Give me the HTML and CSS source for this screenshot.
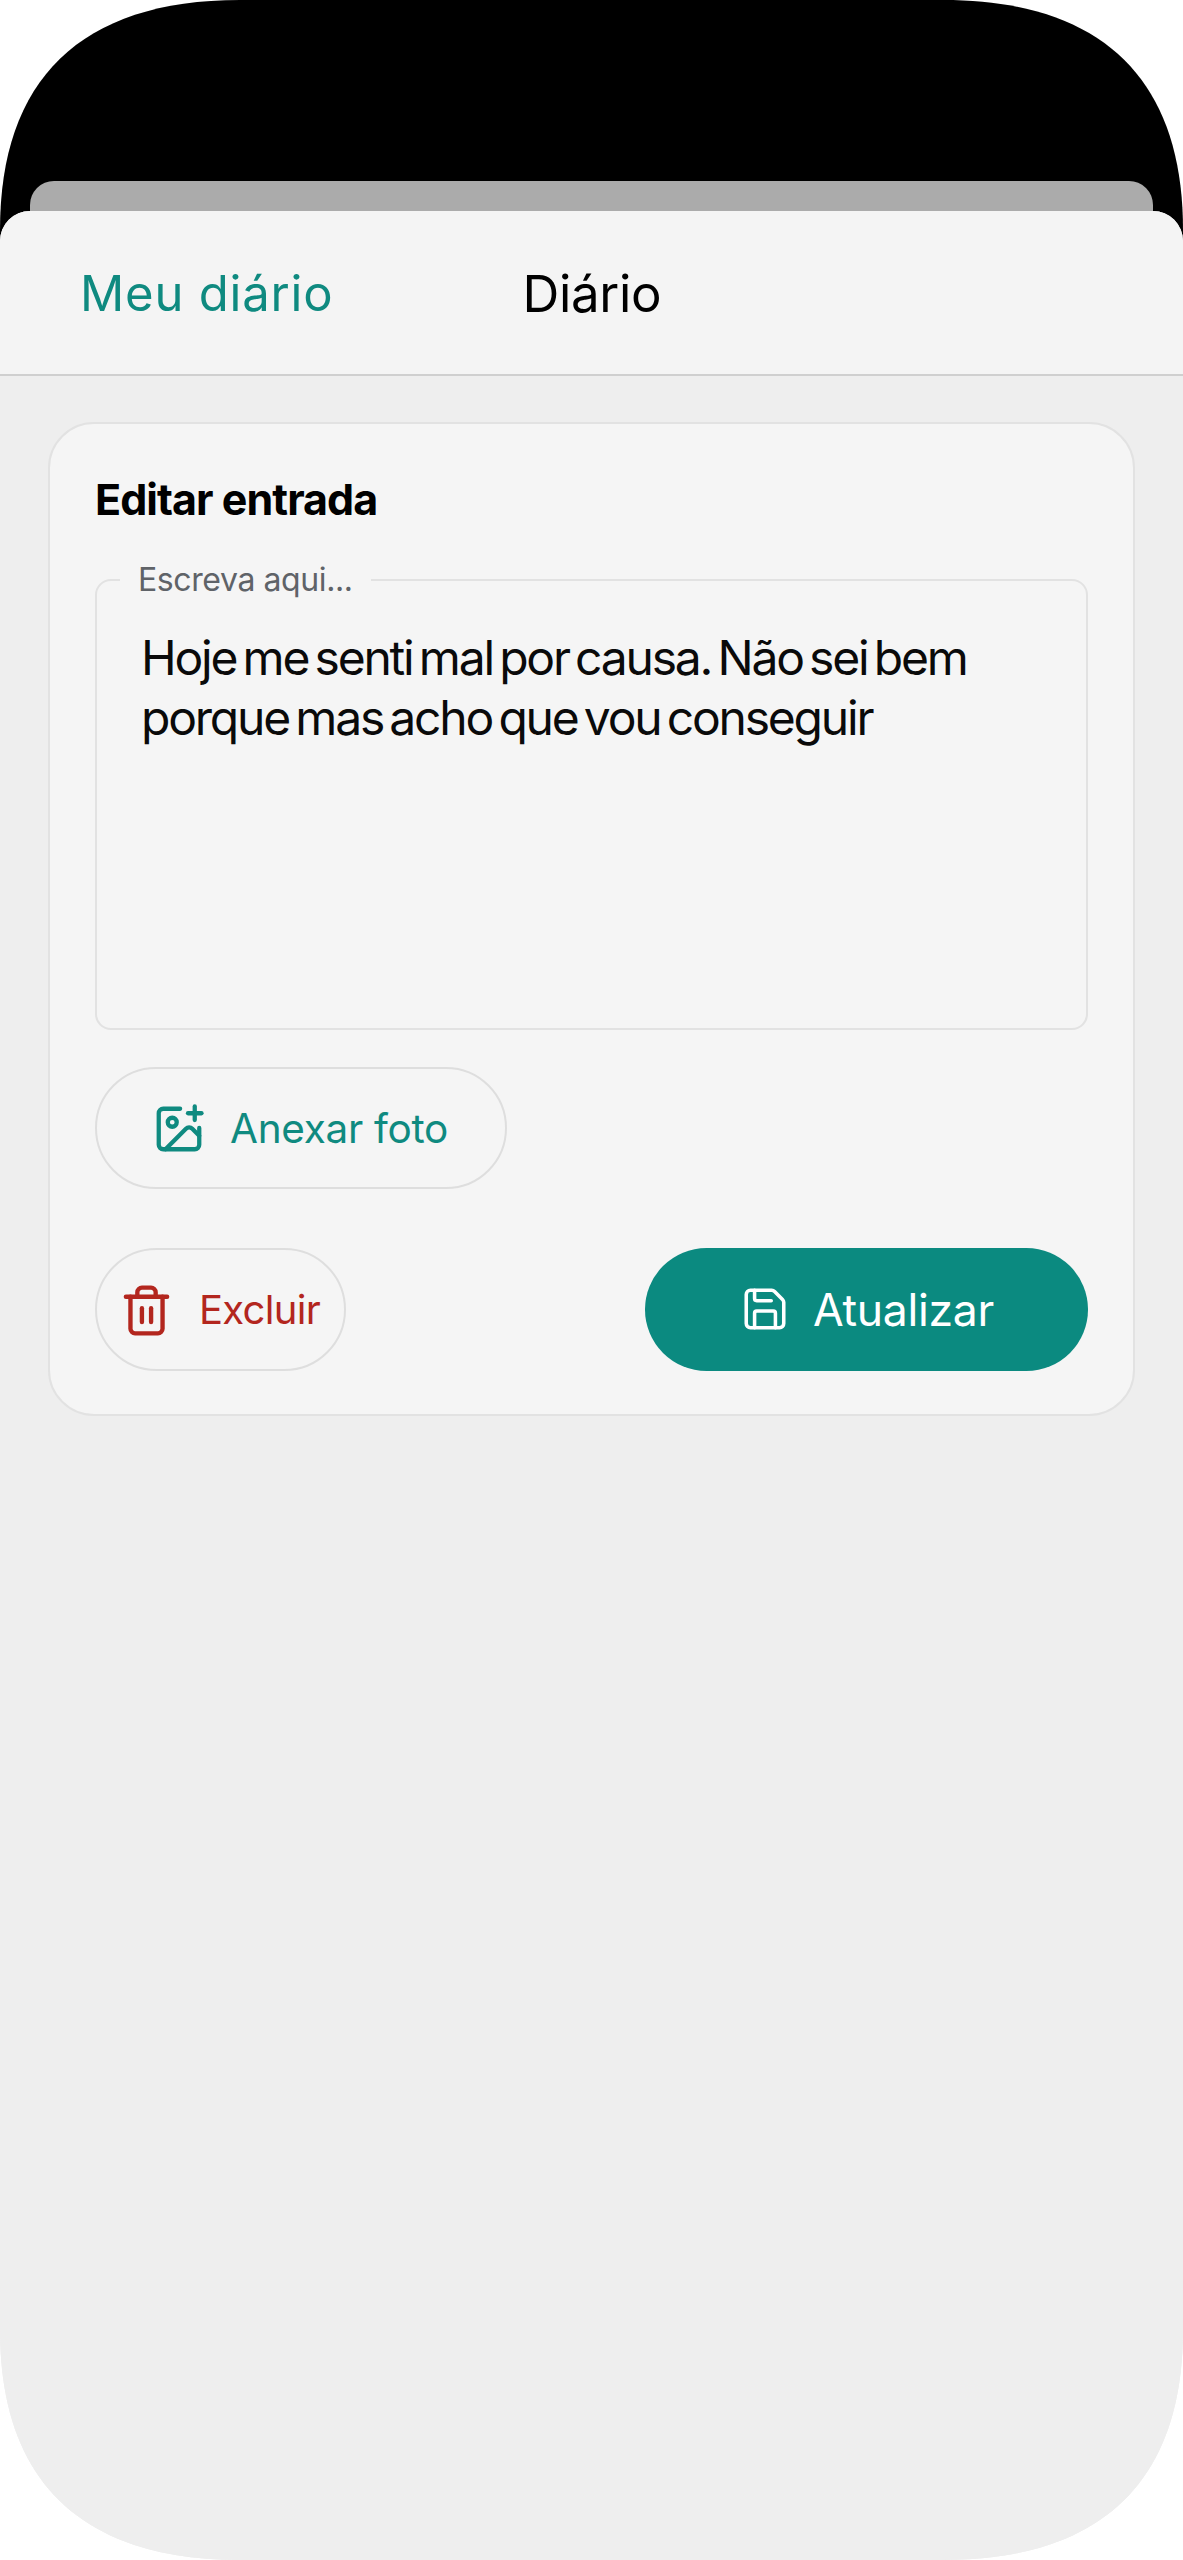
FILE: index.html
```html
<!DOCTYPE html>
<html lang="pt-BR">
<head>
  <meta charset="UTF-8" />
  <title>Diário</title>
  <link rel="stylesheet" href="styles.css">
</head>
<body>

<div class="phone">
  <div class="status-area">
    <div class="peek"></div>
  </div>

  <div class="sheet">
    <header class="topbar">
      <a class="back-link">Meu diário</a>
      <span class="topbar-title">Diário</span>
    </header>

    <main class="content">
      <section class="card">
        <h1 class="card-title">Editar entrada</h1>

        <fieldset class="field">
          <legend class="field-label">Escreva aqui...</legend>
          <p class="field-text">Hoje me senti mal por causa. Não sei bem porque mas acho que vou conseguir</p>
        </fieldset>

        <button class="btn btn-attach">
          <svg class="icon icon-attach" viewBox="0 0 24 24">
            <path d="M16 5h6" />
            <path d="M19 2v6" />
            <path d="M21 11.5V19a2 2 0 0 1-2 2H5a2 2 0 0 1-2-2V5a2 2 0 0 1 2-2h7.5" />
            <path d="m21 15-3.086-3.086a2 2 0 0 0-2.828 0L6 21" />
            <circle cx="9" cy="9" r="2" />
          </svg>
          <span>Anexar foto</span>
        </button>

        <div class="actions">
          <button class="btn btn-delete">
            <svg class="icon icon-delete" viewBox="0 0 24 24">
              <path d="M3 6h18" />
              <path d="M19 6v14c0 1-1 2-2 2H7c-1 0-2-1-2-2V6" />
              <path d="M8 6V4c0-1 1-2 2-2h4c1 0 2 1 2 2v2" />
              <path d="M10 11v6" />
              <path d="M14 11v6" />
            </svg>
            <span>Excluir</span>
          </button>

          <button class="btn btn-save">
            <svg class="icon icon-save" viewBox="0 0 24 24">
              <path d="M15.2 3a2 2 0 0 1 1.4.6l3.8 3.8a2 2 0 0 1 .6 1.4V19a2 2 0 0 1-2 2H5a2 2 0 0 1-2-2V5a2 2 0 0 1 2-2z" />
              <path d="M17 21v-7a1 1 0 0 0-1-1H8a1 1 0 0 0-1 1v7" />
              <path d="M7 3v4a1 1 0 0 0 1 1h7" />
            </svg>
            <span>Atualizar</span>
          </button>
        </div>
      </section>
    </main>
  </div>
</div>

</body>
</html>
```

FILE: styles.css
```css
body {
  margin: 0;
  padding: 0;
  background: white;
  font-family: Inter, "Noto Sans", sans-serif;
}

/* rounded device outline */
.phone {
  display: flex;
  flex-direction: column;
  width: 1183px;
  height: 2560px;
  background: #eeeeee;
  clip-path: path("M0 230 C0 80 80 0 240 0 H943 C1103 0 1183 80 1183 230 V2330 C1183 2480 1103 2560 943 2560 H240 C80 2560 0 2480 0 2330 Z");
}

.status-area {
  flex: none;
  height: 260px;
  padding-top: 181px;
  box-sizing: border-box;
  background: black;
}

.peek {
  height: 60px;
  margin: 0 30px;
  background: #ababab;
  border-radius: 24px 24px 0 0;
}

/* sheet slides over the black area so its corners show it */
.sheet {
  flex: 1;
  margin-top: -49px;
  background: #eeeeee;
  border-radius: 30px 30px 0 0;
  overflow: hidden;
}

.topbar {
  display: flex;
  align-items: center;
  height: 165px;
  padding: 2px 0 0 80px;
  box-sizing: border-box;
  background: #f4f4f4;
  border-bottom: 2px solid #cfcfcf;
}

.back-link {
  font-size: 49px;
  letter-spacing: 0.8px;
  color: #0f8a80;
}

.topbar-title {
  margin-left: 189px;
  font-size: 51px;
  letter-spacing: -0.3px;
  color: black;
}

.content {
  padding: 46px 48px 0;
}

.card {
  height: 994px;
  padding: 50px 45px 0;
  box-sizing: border-box;
  background: #f5f5f5;
  border: 2px solid #e2e2e2;
  border-radius: 46px;
}

.card-title {
  margin: 0 0 36px;
  font-size: 43px;
  line-height: 50px;
  font-weight: 700;
  letter-spacing: -0.95px;
  color: black;
}

.field {
  margin: 0 0 37px;
  padding: 0;
  min-width: 0;
  background: #f5f5f5;
  border: 2px solid #e2e2e2;
  border-radius: 16px;
}

.field-label {
  margin-left: 23px;
  padding: 0 18px;
  font-size: 32px;
  line-height: 40px;
  letter-spacing: -0.4px;
  color: #5f6368;
}

.field-text {
  height: 428px;
  margin: 0;
  padding: 28px 44px 0;
  box-sizing: border-box;
  font-size: 48px;
  line-height: 60px;
  letter-spacing: -2.2px;
  word-spacing: -5px;
  color: #0a0a0a;
}

.btn {
  display: flex;
  align-items: center;
  height: 123px;
  padding: 0;
  box-sizing: border-box;
  font-family: inherit;
  background: transparent;
  border: 2px solid #dedede;
  border-radius: 62px;
}

.icon {
  flex: none;
  fill: none;
  stroke: currentColor;
  stroke-linecap: round;
  stroke-linejoin: round;
}

.btn-attach {
  height: 122px;
  padding: 0 57px 0 55px;
  font-size: 40.5px;
  letter-spacing: -0.3px;
  color: #0f8a80;
}

.icon-attach {
  width: 54px;
  height: 54px;
  margin-top: 2px;
  margin-right: 24px;
  stroke-width: 1.9;
}

.actions {
  display: flex;
  justify-content: space-between;
  margin-top: 59px;
}

.btn-delete {
  padding: 0 24px 0 22px;
  font-size: 40px;
  letter-spacing: -0.7px;
  color: #b3261e;
}

.icon-delete {
  width: 55px;
  height: 55px;
  margin-top: 2px;
  margin-right: 25px;
  stroke-width: 1.9;
}

.btn-save {
  width: 443px;
  padding-left: 95px;
  font-size: 44.5px;
  letter-spacing: -0.3px;
  color: white;
  background: #0b8a80;
  border: none;
}

.icon-save {
  width: 50px;
  height: 50px;
  margin-top: -2px;
  margin-right: 23px;
  stroke-width: 1.7;
}
```
